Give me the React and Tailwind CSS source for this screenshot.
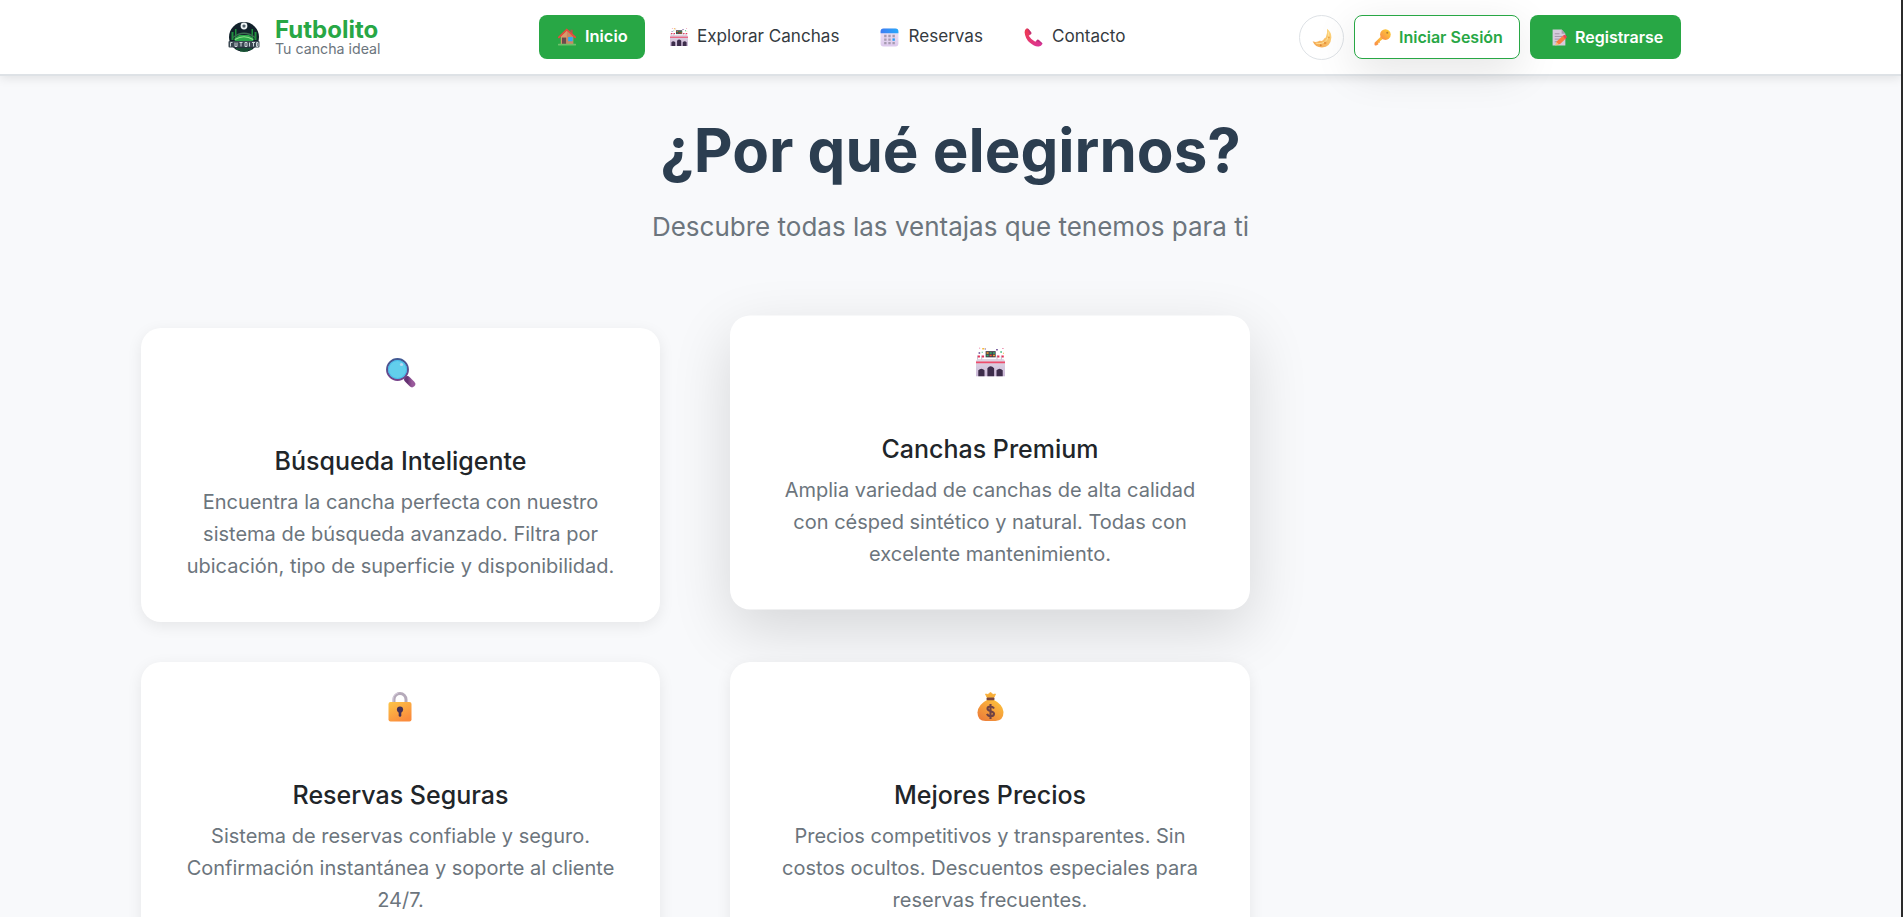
function Logo() {
  return (
    <svg className="h-8 w-8" viewBox="0 0 32 32">
      <circle cx="16" cy="16" r="15" fill="#12212b" />
      <path d="M3.500 11h2v8h-2zM7 8h1.500v9H7zM23.500 8H25v9h-1.500zM26.500 11h2v8h-2z" fill="#1f8f3e" />
      <path d="M6 18L11 14h10l5 4-1 2H7z" fill="#2aa84a" />
      <path d="M5 16.500Q16 8 27 16.500" fill="none" stroke="#3c6b52" strokeWidth="1.500" />
      <path d="M7 18.500Q16 13 25 18.500" fill="none" stroke="#8fe08c" strokeWidth="1.200" />
      <circle cx="16" cy="5" r="3.400" fill="#eef3f4" />
      <path d="M16 3.300l1.700 1.300-.6 1.900h-2.200l-.6-1.900z" fill="#506069" />
      <rect x=".5" y="20" width="31" height="6.500" rx="1" fill="#3a4751" />
      <path d="M2.500 25.500v-4h2M7 21.500v4h2v-4M11.500 21.500h3M13 21.500v4M17 21.500v4h2v-4zM21.500 21.500v4M24 21.500h3M25.500 21.500v4M28.500 21.500v4h1.500v-4z" fill="none" stroke="#cbd5d9" strokeWidth="1" />
      <path d="M8 28h16M12 30h8" stroke="#1f7a3d" strokeWidth="1" />
    </svg>
  );
}

function House() {
  return (
    <svg className="h-[18px] w-[18px]" viewBox="0 0 32 32">
      <path d="M5 14L16 4l11 11v14H5z" fill="#d99b6c" />
      <path d="M16 5l11 10v14H15z" fill="#c88a64" />
      <path d="M22 3h4v9l-4-4z" fill="#b5534a" />
      <path d="M1.500 16.500L15.500 3 30.500 16.500" fill="none" stroke="#e8493e" strokeWidth="3.200" strokeLinecap="round" />
      <rect x="7" y="17" width="7.500" height="12" fill="#6d4a4d" />
      <rect x="18" y="16" width="8" height="7.500" fill="#2fa8f5" />
      <path d="M1 29.500h30" stroke="#6fc06b" strokeWidth="3" strokeLinecap="round" />
    </svg>
  );
}

function Stadium({ className }) {
  return (
    <svg className={className} viewBox="0 0 28 28">
      <defs>
        <linearGradient id="wall" x2="0" y2="1"><stop stopColor="#e0d6e3" /><stop offset="1" stopColor="#cbb8d8" /></linearGradient>
      </defs>
      <path d="M1.500 11h25l1.500 2v15H0V13z" fill="url(#wall)" />
      <path d="M0 13.500h28v1.700H0z" fill="#ee4d6c" />
      <path d="M2.200 28v-6q3-3 6 0v6zM11 28v-8q3-4 6.500 0v8zM19.800 28v-6q3-3 6 0v6z" fill="#3d2d4b" />
      <rect x="9.300" y="3.500" width="9.700" height="6" fill="#463c4a" />
      <path d="M10.200 4.500h2V6h-2zM16.300 7h2v1.500h-2z" fill="#f5a12d" />
      <path d="M13.200 4.500h2V6h-2zM10.200 7h2v1.500h-2zM16.300 4.500h2V6h-2z" fill="#32b46b" />
      <path d="M13.200 7h2v1.500h-2z" fill="#ee5735" />
      <path d="M1.500 7.800h2.300v1.800H1.500zM5.500 7.800h2.300v1.800H5.500zM20.300 7.800h2.300v1.800h-2.300zM24.500 7.800h2.300v1.800h-2.300z" fill="#e82e54" />
      <path d="M1.500 8v3.500M5.500 8v3.500M20.300 8v3.500M24.500 8v3.500" stroke="#b3a5bd" strokeWidth=".7" />
      <path d="M2.500 4.500H4V6H2.500zM19.500 1.500H21V3h-1.500zM8.500 1h1v1h-1z" fill="#63418f" />
      <path d="M6 .5h2V2H6zM26 5h1v1h-1z" fill="#f6b83c" />
      <path d="M3 0h1v1H3zM25.500.5h1v1h-1z" fill="#e45c8b" />
      <path d="M5.500 4h1v1h-1zM23.500 3.500H25V5h-1.500z" fill="#32b577" />
    </svg>
  );
}

function Calendar() {
  return (
    <svg className="h-[19px] w-[19px]" viewBox="0 0 32 32">
      <defs>
        <linearGradient id="calTop"><stop stopColor="#3f7df2" /><stop offset="1" stopColor="#28a9fb" /></linearGradient>
        <linearGradient id="calBody" x2="0" y2="1"><stop stopColor="#efe5f4" /><stop offset="1" stopColor="#ddc9ed" /></linearGradient>
      </defs>
      <rect x="1" y="1" width="30" height="30" rx="5" fill="url(#calBody)" />
      <path d="M1 9V6q0-5 5-5h20q5 0 5 5v3z" fill="url(#calTop)" />
      <path d="M7 11.500h4v4H7zM14 11.500h4v4h-4zM21 11.500h4v4h-4zM7 17.500h4v4H7zM14 17.500h4v4h-4zM7 23.500h4v4H7zM14 23.500h4v4h-4zM21 23.500h4v4h-4z" fill="#a69bb1" />
      <path d="M21 17.500h4v4h-4z" fill="#259cf3" />
    </svg>
  );
}

function Phone() {
  return (
    <svg className="h-[19px] w-[19px]" viewBox="0 0 32 32">
      <defs><linearGradient id="phone" x2="1" y2="1"><stop stopColor="#f03a4c" /><stop offset="1" stopColor="#d9349c" /></linearGradient></defs>
      <path d="M4 1Q1 3 1 7q1 11 9 18t15 6q4 0 6-4 0-2-2-3l-4-4q-2-1-3 0l-3 3Q12 20 8 13l4-3q1-2 0-3L8 2Q6 0 4 1z" fill="url(#phone)" />
      <path d="M5 1q2-1 3 1l4 5q1 1 0 3l-1.500 1zM31 27q0-2-2-3l-4-4q-2-1-3 0l-1.500 1.500z" fill="#a82d7d" opacity=".6" />
    </svg>
  );
}

function Moon() {
  return (
    <svg className="h-5 w-5" viewBox="0 0 32 32">
      <defs><linearGradient id="moon" x1="1" x2="0" y2="1"><stop stopColor="#ffdc83" /><stop offset="1" stopColor="#f3a34d" /></linearGradient></defs>
      <path d="M24 1q7 5 7 14-1 15-15 16Q5 31 1 21q6 3 12-1 2 2 5-1 1-3 4-4 3-6 2-14z" fill="url(#moon)" />
      <path d="M26 6q3 8-3 14-7 7-17 4" fill="none" stroke="#ffe39b" strokeWidth="1.500" />
      <circle cx="21" cy="24" r="2" fill="#e8963f" /><circle cx="14" cy="27.500" r="1.500" fill="#dc8438" /><circle cx="27" cy="15" r="1.500" fill="#eda548" />
    </svg>
  );
}

function Key() {
  return (
    <svg className="h-[17px] w-[17px]" viewBox="0 0 32 32">
      <defs><linearGradient id="key" x1="1" x2="0" y2="1"><stop stopColor="#ffd532" /><stop offset="1" stopColor="#f8874b" /></linearGradient></defs>
      <path d="M14 13L1 26v4q1 1 3 1l4-2v-3h3v-3l7-5z" fill="url(#key)" />
      <circle cx="21.500" cy="10.500" r="10" fill="url(#key)" />
      <circle cx="25" cy="7" r="2" fill="#b57c35" />
    </svg>
  );
}

function Memo() {
  return (
    <svg className="h-[17px] w-[15px]" viewBox="0 0 28 32">
      <path d="M1 1h17l7 8v22H1z" fill="#d6cbdc" />
      <path d="M18 1v8h7z" fill="#a99caf" />
      <path d="M5 9h9M5 14h15M5 19h10M5 24h6" stroke="#998da1" strokeWidth="1.600" />
      <path d="M8 24L20 13l6 5-11 10-8 2z" fill="#fa7b41" />
      <path d="M20 13l3-2q3 0 5 4l-3 4z" fill="#ee4555" /><path d="M8 24l5 5-7 2z" fill="#f5bd83" />
    </svg>
  );
}

function Magnifier() {
  return (
    <svg className="h-[30px] w-[30px]" viewBox="0 0 30 30">
      <defs>
        <linearGradient id="ring" x2="0" y2="1"><stop stopColor="#405992" /><stop offset="1" stopColor="#76428a" /></linearGradient>
        <linearGradient id="grip" x2="1"><stop stopColor="#653272" /><stop offset="1" stopColor="#99599b" /></linearGradient>
      </defs>
      <path d="M18 18l3 3" stroke="#65417f" strokeWidth="3" />
      <path d="M21.500 21.500L26 26" stroke="url(#grip)" strokeWidth="6.500" strokeLinecap="round" />
      <circle cx="11.500" cy="11.500" r="10.500" fill="#62cfec" stroke="url(#ring)" strokeWidth="1.900" />
      <circle cx="11.500" cy="11.500" r="9" fill="none" stroke="#47b8e8" strokeWidth="1" />
      <circle cx="15.500" cy="6.500" r="1.600" fill="#b9daf5" />
    </svg>
  );
}

function Lock() {
  return (
    <svg className="-ml-[1px] h-[30px] w-[24px]" viewBox="0 0 24 30">
      <defs><linearGradient id="lock" x2=".6" y2="1"><stop stopColor="#fcc548" /><stop offset="1" stopColor="#fb8c3c" /></linearGradient></defs>
      <path d="M6 12V7.500a6 6 0 0 1 12 0V12" fill="none" stroke="#b5aaba" strokeWidth="3" />
      <path d="M5 12V7a7 7 0 0 1 5-6" fill="none" stroke="#d6cbdc" strokeWidth="1" />
      <rect x=".5" y="10" width="23" height="19.500" rx="2" fill="url(#lock)" />
      <circle cx="12" cy="17.500" r="3.100" fill="#443055" /><path d="M10.700 17h2.600v6.500a1.300 1.300 0 0 1-2.600 0z" fill="#443055" />
    </svg>
  );
}

function MoneyBag() {
  return (
    <svg className="ml-[1px] h-[30px] w-[27px]" viewBox="0 0 27 30">
      <defs><linearGradient id="bag" x1="1" x2=".2" y2="1"><stop stopColor="#ffc83c" /><stop offset="1" stopColor="#ec7d39" /></linearGradient></defs>
      <path d="M10 8h7q9 4.500 9.500 12 0 8.500-8 9h-10Q.5 29 .5 20.500 1 12.500 10 8z" fill="url(#bag)" />
      <path d="M10 5.500L8.500 2l2.500.5L13.500.3 16 2.500l2.500-.5L17 5.500z" fill="#f8ad35" stroke="#f8ad35" strokeWidth=".8" strokeLinejoin="round" />
      <rect x="9.500" y="5.500" width="8" height="2.800" rx="1" fill="#76433e" />
      <path d="M17 16.500q-1-2-3.500-2-3 0-3 2.200c0 3 6.500 2 6.500 5q0 2.500-3.500 2.500-2.500 0-3.500-2.300M13.500 12v15" fill="none" stroke="#6e4244" strokeWidth="2.100" />
    </svg>
  );
}

function NavLink({ icon, children, active }) {
  return (
    <a className={`flex h-11 items-center gap-[9px] rounded-[8px] pl-[19px] ${active ? "w-[106px] bg-[#28a745] text-[16.400px] font-semibold text-white" : "pr-4 text-[17.100px] font-normal text-[#343a40]"}`}>
      {icon}
      <span className={active ? "-mt-[1px]" : "-mt-[2px]"}>{children}</span>
    </a>
  );
}

function Card({ icon, title, lines, raised }) {
  return (
    <article
      className={`flex h-[294px] flex-col items-center rounded-[20px] bg-white pt-[30px] text-center ${raised ? "-translate-y-[12.5px] shadow-[0_20px_60px_rgba(0,0,0,0.14)]" : "relative z-10 shadow-[0_4px_15px_rgba(0,0,0,0.08)]"}`}
    >
      <div className="flex h-[89px] items-start">{icon}</div>
      <h3 className="text-[25px] leading-[29px] font-medium text-[#212529]">{title}</h3>
      <p className="mt-[10px] text-[20px] leading-8 whitespace-nowrap text-[#6c757d]">
        {lines.map((line) => (
          <span className="block" key={line}>{line}</span>
        ))}
      </p>
    </article>
  );
}

export default function App() {
  return (
    <div className="h-[917px] overflow-hidden border-r-2 border-[#2b2b2b] bg-[#f8f9fb] font-['Inter',sans-serif]">
      <header className="flex h-[76px] border-b-2 border-[#dee2e6] bg-white pl-[228px] shadow-[0_2px_10px_rgba(0,0,0,0.1)]">
        <div className="flex w-[311px] items-center">
          <Logo />
          <div className="ml-[15px] flex flex-col">
            <span className="text-[24px] leading-[25px] font-bold text-[#28a745]">Futbolito</span>
            <span className="pb-[1px] text-[14.200px] leading-[14px] text-[#6c757d]">Tu cancha ideal</span>
          </div>
        </div>
        <nav className="flex w-[760px] items-start gap-[6px] pt-[15px]">
          <NavLink icon={<House />} active>Inicio</NavLink>
          <NavLink icon={<Stadium className="h-[18px] w-[18px]" />}>Explorar Canchas</NavLink>
          <NavLink icon={<Calendar />}>Reservas</NavLink>
          <NavLink icon={<Phone />}>Contacto</NavLink>
        </nav>
        <div className="flex items-start gap-[10px] pt-[15px]">
          <button className="flex h-[45px] w-[45px] items-center justify-center rounded-full border border-[#dee2e6]"><Moon /></button>
          <button className="flex h-11 w-[166px] items-center gap-2 rounded-[8px] border border-[#28a745] bg-white pl-[19px] text-[16px] font-semibold text-[#28a745] shadow-[0_12px_44px_rgba(0,0,0,0.11)]">
            <Key />
            <span className="-mt-[1px]">Iniciar Sesión</span>
          </button>
          <button className="flex h-11 w-[151px] items-center gap-2 rounded-[8px] bg-[#28a745] pl-[22px] text-[16px] font-semibold text-white">
            <Memo />
            <span className="-mt-[1px]">Registrarse</span>
          </button>
        </div>
      </header>
      <main className="px-[141px] pt-[39px]">
        <div className="text-center">
          <h2 className="text-[60px] leading-[70px] font-bold text-[#2c3e50]">¿Por qué elegirnos?</h2>
          <p className="mt-[23px] text-[26px] leading-[38px] text-[#6c757d]">Descubre todas las ventajas que tenemos para ti</p>
        </div>
        <section className="mt-[82px] grid grid-cols-[519px_520px] gap-x-[70px] gap-y-[40px]">
          <Card icon={<Magnifier />} title="Búsqueda Inteligente" lines={["Encuentra la cancha perfecta con nuestro", "sistema de búsqueda avanzado. Filtra por", "ubicación, tipo de superficie y disponibilidad."]} />
          <Card raised icon={<Stadium className="mt-[2px] h-[29px] w-[29px]" />} title="Canchas Premium" lines={["Amplia variedad de canchas de alta calidad", "con césped sintético y natural. Todas con", "excelente mantenimiento."]} />
          <Card icon={<Lock />} title="Reservas Seguras" lines={["Sistema de reservas confiable y seguro.", "Confirmación instantánea y soporte al cliente", "24/7."]} />
          <Card icon={<MoneyBag />} title="Mejores Precios" lines={["Precios competitivos y transparentes. Sin", "costos ocultos. Descuentos especiales para", "reservas frecuentes."]} />
        </section>
      </main>
    </div>
  );
}
